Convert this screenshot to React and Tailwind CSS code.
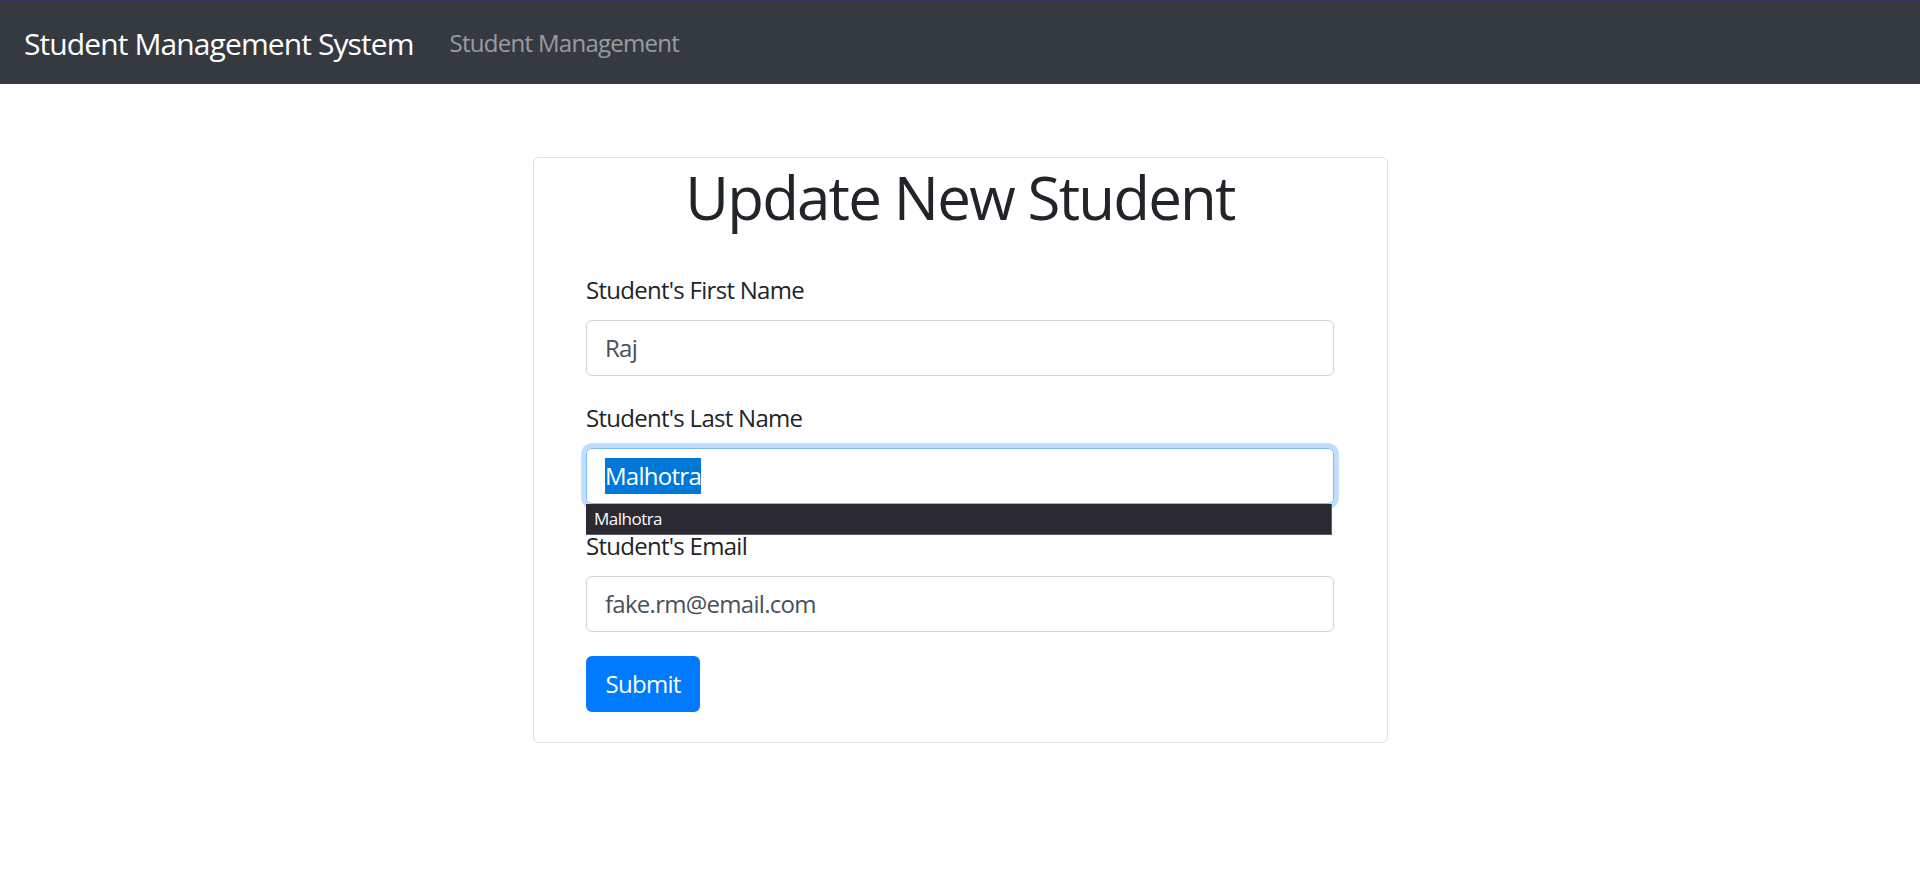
export default function App() {
  const font = { fontFamily: '"Open Sans", "Noto Sans", sans-serif' };

  return (
    <div className="min-h-[892px] bg-white" style={font}>
      <nav className="flex h-[84px] items-center border-t-2 border-[#3b3366] bg-[#343a40] px-6">
        <span className="mr-6 text-[30px] leading-[45px] tracking-[-0.03em] text-white">
          Student Management System
        </span>
        <span className="px-3 text-[24px] leading-9 tracking-[-0.03em] text-white/50">
          Student Management
        </span>
      </nav>

      <div className="mx-auto mt-[73px] w-[1710px]">
        <div className="ml-[427.5px] w-[855px] rounded-[6px] border-[1.5px] border-black/[0.125] px-[22.5px]">
          <h1 className="mb-[9px] pt-[3px] text-center text-[60px] leading-[72px] tracking-[-0.03em] text-[#212529]">
            Update New Student
          </h1>

          <form className="p-[30px] tracking-[-0.03em]">
            <div className="mb-6">
              <label className="mb-3 block text-[24px] leading-9 tracking-[-0.03em] text-[#212529]">
                Student's First Name
              </label>
              <div className="flex h-[56px] items-center rounded-[6px] border-[1.5px] border-[#ced4da] px-[18px] text-[24px] tracking-[-0.03em] text-[#495057]">
                Raj
              </div>
            </div>

            <div className="relative mb-6">
              <label className="mb-3 block text-[24px] leading-9 tracking-[-0.03em] text-[#212529]">
                Student's Last Name
              </label>
              <div className="flex h-[56px] items-center rounded-[6px] border-[1.5px] border-[#80bdff] px-[18px] text-[24px] tracking-[-0.03em] text-[#495057] shadow-[0_0_0_4.8px_rgba(0,123,255,0.25)]">
                <span className="bg-[#0078d7] leading-9 text-white">Malhotra</span>
              </div>
              <div className="absolute left-0 right-[2px] top-[104px] flex h-[31px] items-center border-r-[1.5px] border-b-[1.5px] border-[#5b5b66] bg-[#2b2a33] px-2 text-[17px] tracking-[-0.03em] text-[#fbfbfe]">
                Malhotra
              </div>
            </div>

            <div className="mb-6">
              <label className="mb-3 block text-[24px] leading-9 tracking-[-0.03em] text-[#212529]">
                Student's Email
              </label>
              <div className="flex h-[56px] items-center rounded-[6px] border-[1.5px] border-[#ced4da] px-[18px] text-[24px] tracking-[-0.03em] text-[#495057]">
                fake.rm@email.com
              </div>
            </div>

            <button
              type="button"
              className="h-[56px] rounded-[6px] bg-[#007bff] px-[19.5px] text-[24px] tracking-[-0.03em] text-white"
            >
              Submit
            </button>
          </form>
        </div>
      </div>
    </div>
  );
}
